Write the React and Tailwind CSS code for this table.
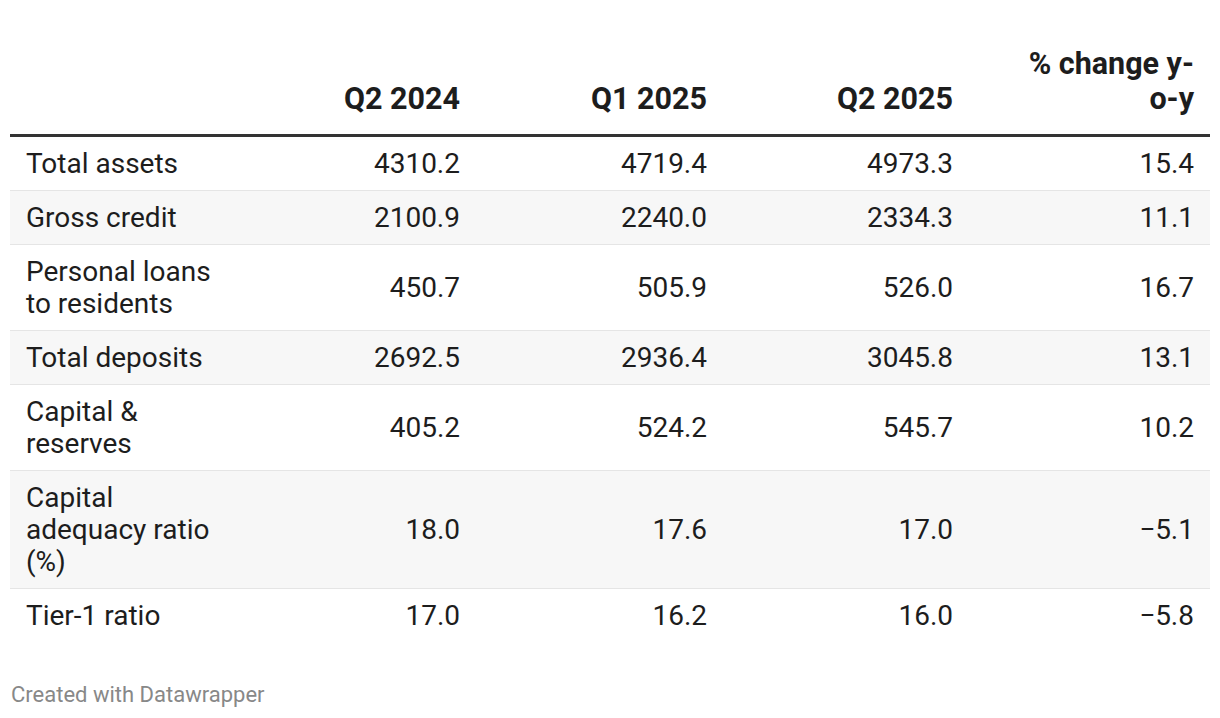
const rows = [
  { label: "Total assets", v: ["4310.2", "4719.4", "4973.3", "15.4"] },
  { label: "Gross credit", v: ["2100.9", "2240.0", "2334.3", "11.1"] },
  { label: "Personal loans to residents", v: ["450.7", "505.9", "526.0", "16.7"] },
  { label: "Total deposits", v: ["2692.5", "2936.4", "3045.8", "13.1"] },
  { label: "Capital & reserves", v: ["405.2", "524.2", "545.7", "10.2"] },
  { label: "Capital adequacy ratio (%)", v: ["18.0", "17.6", "17.0", "−5.1"] },
  { label: "Tier-1 ratio", v: ["17.0", "16.2", "16.0", "−5.8"] },
];

const headers = ["Q2 2024", "Q1 2025", "Q2 2025"];

export default function App() {
  return (
    <div
      className="w-[1220px] h-[718px] bg-white text-[#1d1d1d] overflow-hidden"
      style={{ fontFamily: "Roboto, 'Liberation Sans', sans-serif" }}
    >
      <div className="pt-[46px] px-[10px]">
        <table className="w-[1200px] table-fixed border-collapse">
          <colgroup>
            <col className="w-[224px]" />
            <col className="w-[242px]" />
            <col className="w-[247px]" />
            <col className="w-[246px]" />
            <col className="w-[241px]" />
          </colgroup>
          <thead>
            <tr className="border-b-[3px] border-[#333333]">
              <th className="px-4 pb-[18px]"></th>
              {headers.map((h) => (
                <th
                  key={h}
                  className="px-4 pb-[18px] align-bottom text-right text-[30.5px] font-bold leading-[35px]"
                >
                  {h}
                </th>
              ))}
              <th className="pl-[40px] pr-4 pb-[18px] align-bottom text-right text-[30.5px] font-bold leading-[35px]">
                % change y-o-y
              </th>
            </tr>
          </thead>
          <tbody>
            {rows.map((r, i) => (
              <tr
                key={r.label}
                className={
                  (i % 2 === 1 ? "bg-[#f7f7f7] " : "bg-white ") +
                  (i < rows.length - 1 ? "border-b border-[#e5e5e5]" : "")
                }
              >
                <td className="pl-4 pr-2 py-[10.5px] text-[28px] leading-[32px] text-left align-middle">
                  {r.label}
                </td>
                {r.v.map((v, j) => (
                  <td
                    key={j}
                    className="px-4 py-[10.5px] text-[28px] leading-[32px] text-right align-middle"
                  >
                    {v}
                  </td>
                ))}
              </tr>
            ))}
          </tbody>
        </table>
        <div className="mt-[40px] pl-px text-[22px] text-[#888888] leading-[26px]">
          Created with Datawrapper
        </div>
      </div>
    </div>
  );
}
